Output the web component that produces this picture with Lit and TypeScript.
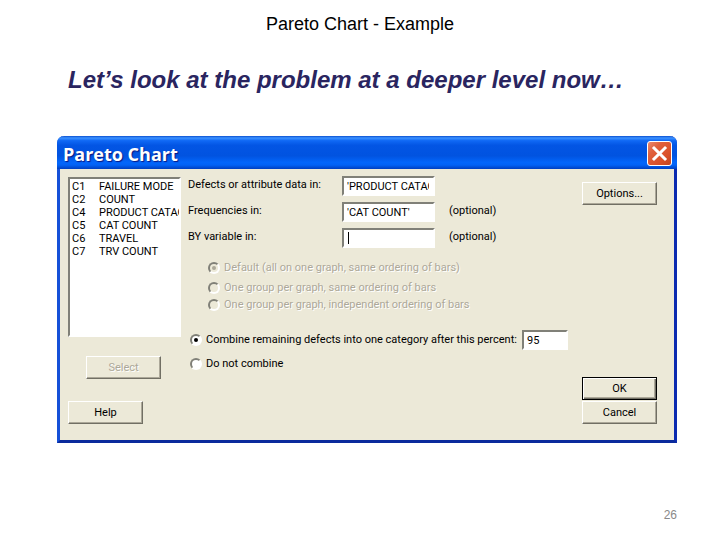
import { LitElement, html, css } from "lit";
import { customElement } from "lit/decorators.js";

const COLUMNS: [string, string][] = [
  ["C1", "FAILURE MODE"],
  ["C2", "COUNT"],
  ["C4", "PRODUCT CATAGORY"],
  ["C5", "CAT COUNT"],
  ["C6", "TRAVEL"],
  ["C7", "TRV COUNT"],
];

const GROUPINGS = [
  "Default (all on one graph, same ordering of bars)",
  "One group per graph, same ordering of bars",
  "One group per graph, independent ordering of bars",
];

@customElement("pareto-dialog")
class ParetoDialog extends LitElement {
  static styles = css`
    :host {
      display: block;
      font-family: Roboto, sans-serif;
      font-size: 11px;
      line-height: 14px;
      color: #000;
    }
    * { box-sizing: border-box; }
    button, input, select { font: inherit; color: inherit; margin: 0; border-radius: 0; }
    .window {
      border: solid;
      border-width: 0 3px 3px;
      border-color: #0831d9 #0a2ab0 #0a2a9c #1650d8;
      border-radius: 7px 7px 0 0;
      background: #ece9d8;
    }
    .titlebar {
      display: flex;
      align-items: center;
      justify-content: space-between;
      height: 33px;
      margin: 0 -3px;
      padding: 2px 5px 0 6px;
      border-radius: 7px 7px 0 0;
      background: linear-gradient(#0a4fd0 0, #3c92ff 6%, #1069f5 14%, #0355e4 28%, #0153e0 60%, #0366fb 80%, #0262f5 88%, #003fc0 100%);
    }
    h2 {
      margin: 0;
      font: bold 18px/24px "Open Sans", sans-serif;
      color: #fff;
      text-shadow: 1px 1px 1px #0a1883;
    }
    .close {
      display: block;
      width: 25px;
      height: 25px;
      padding: 0;
      border: 1px solid #fff;
      border-radius: 3px;
      background: linear-gradient(135deg, #ea8a70 0, #e0603c 30%, #da5028 70%, #c04420 100%);
    }
    .close svg { display: block; width: 23px; height: 23px; }
    .body {
      display: grid;
      grid-template-columns: 113px minmax(0, 1fr) 75px;
      gap: 0 7px;
      padding: 7px 17px 16px 8px;
    }
    .left, .right { display: flex; flex-direction: column; padding-top: 1px; }
    .list {
      width: 113px;
      height: 160px;
      padding: 1px 2px;
      overflow: hidden;
      background: #fff;
      border: 2px solid;
      border-color: #808078 #fff #fff #808078;
      outline: 0;
    }
    .list option { padding: 0; min-height: 0; height: 13px; line-height: 13px; }
    .button {
      width: 75px;
      height: 23px;
      padding: 0;
      background: #ece9d8;
      border: 1px solid;
      border-color: #fff #716f64 #716f64 #fff;
      box-shadow: inset -1px -1px #aca899;
    }
    .button:disabled { color: #aca899; text-shadow: 1px 1px #fff; }
    .select { margin: 19px 0 22px 18px; }
    .options { margin: 5px 0 auto; }
    .ok { margin-bottom: 1px; border-color: #000; box-shadow: inset 1px 1px #fff, inset -1px -1px #716f64, inset -2px -2px #aca899; }
    .fields {
      display: grid;
      grid-template-columns: 154px 93px auto;
      row-gap: 6px;
    }
    .fields label, .note { padding-top: 2px; }
    .note { padding-left: 14px; }
    .text {
      width: 100%;
      height: 20px;
      padding: 0 4px 0 3px;
      background: #fff;
      border: 2px solid;
      border-color: #808078 #fff #fff #808078;
      outline: 0;
    }
    .active {
      background: linear-gradient(#000, #000) 4px center / 1px 12px no-repeat #fff;
      caret-color: transparent;
    }
    .radio { display: flex; align-items: center; height: 17px; }
    .radio input {
      appearance: none;
      display: grid;
      place-items: center;
      flex: none;
      width: 12px;
      height: 12px;
      margin-right: 4px;
      background: #fff;
      border: 2px solid;
      border-color: #808078 #fff #fff #808078;
      border-radius: 50%;
    }
    .radio input:checked::before { content: ""; width: 4px; height: 4px; border-radius: 50%; background: #000; }
    .radio input:disabled { background: #ece9d8; }
    .radio input:disabled:checked::before { background: #aca899; }
    fieldset { border: 0; margin: 0; padding: 0; min-width: 0; }
    .groupings { padding: 11px 0 0 20px; color: #aca899; text-shadow: 1px 1px #fff; }
    .groupings .radio:first-child { margin-bottom: 3px; }
    .combining { display: flex; flex-direction: column; gap: 4px; padding: 17px 7px 0 2px; }
    .percent { display: flex; justify-content: space-between; align-items: center; }
    .combining .radio { height: 20px; white-space: nowrap; }
    .percent .text { width: 46px; }
  `;

  render() {
    return html`
      <section class="window" aria-labelledby="title">
        <header class="titlebar">
          <h2 id="title">Pareto Chart</h2>
          <button class="close" aria-label="Close">
            <svg viewBox="0 0 23 23"><path d="M6 6 L17 17 M17 6 L6 17" stroke="#fff" stroke-width="3" stroke-linecap="square" /></svg>
          </button>
        </header>
        <div class="body">
          <div class="left">
            <select class="list" size="12" aria-label="Columns">
              ${COLUMNS.map(([id, name]) => html`<option value=${id}>${id + "\u00a0".repeat(5) + name}</option>`)}
            </select>
            <button class="button select" disabled>Select</button>
            <button class="button">Help</button>
          </div>
          <div>
            <div class="fields">
              <label for="data">Defects or attribute data in:</label>
              <input class="text" id="data" value="'PRODUCT CATAGORY'" />
              <span></span>
              <label for="freq">Frequencies in:</label>
              <input class="text" id="freq" value="'CAT COUNT'" />
              <span class="note">(optional)</span>
              <label for="by">BY variable in:</label>
              <input class="text active" id="by" />
              <span class="note">(optional)</span>
            </div>
            <fieldset class="groupings" disabled>
              ${GROUPINGS.map((text, i) => html`
                <label class="radio"><input type="radio" name="grouping" ?checked=${i === 0} />${text}</label>`)}
            </fieldset>
            <fieldset class="combining">
              <div class="percent">
                <label class="radio"><input type="radio" name="combine" checked />Combine remaining defects into one category after this percent:</label>
                <input class="text" aria-label="Percent" value="95" />
              </div>
              <label class="radio"><input type="radio" name="combine" />Do not combine</label>
            </fieldset>
          </div>
          <div class="right">
            <button class="button options">Options...</button>
            <button class="button ok">OK</button>
            <button class="button">Cancel</button>
          </div>
        </div>
      </section>
    `;
  }
}

@customElement("app-root")
class AppRoot extends LitElement {
  static styles = css`
    :host {
      display: flex;
      flex-direction: column;
      box-sizing: border-box;
      min-height: 100vh;
      padding: 14px 43px 16px 57px;
      background: #fff;
      font-family: "Liberation Sans", Arial, sans-serif;
    }
    h1 { margin: 0 14px 0 0; font-size: 18px; line-height: 20px; font-weight: 400; text-align: center; color: #000; }
    .lead { margin: 31px 0 41px 11px; font-size: 24px; line-height: 30px; font-weight: 700; font-style: italic; color: #2a2560; }
    .page { margin: auto 0 0; font-size: 12px; line-height: 18px; text-align: right; color: #898989; }
  `;

  render() {
    return html`
      <h1>Pareto Chart - Example</h1>
      <p class="lead">Let’s look at the problem at a deeper level now…</p>
      <pareto-dialog></pareto-dialog>
      <p class="page">26</p>
    `;
  }
}
